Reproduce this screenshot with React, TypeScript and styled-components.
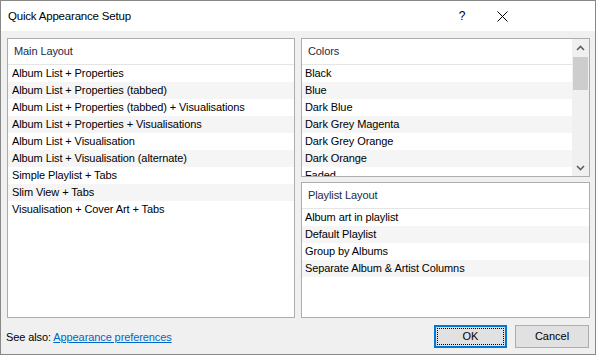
import React from "react";
import styled, { createGlobalStyle } from "styled-components";

const Global = createGlobalStyle`
  html, body { margin: 0; padding: 0; background: #ffffff; }
  body { font-family: "Liberation Sans", Arial, sans-serif; font-size: 11px; }
  * { box-sizing: border-box; }
`;

const Window = styled.div`
  width: 596px;
  height: 355px;
  border: 1px solid #888888;
  background: #f0f0f0;
  display: flex;
  flex-direction: column;
  font-family: "Liberation Sans", Arial, sans-serif;
  font-size: 11px;
  letter-spacing: -0.1px;
  color: #000;
`;

const TitleBar = styled.div`
  height: 30px;
  background: #ffffff;
  display: flex;
  align-items: center;
  padding-left: 7px;
  padding-right: 73px;
  flex-shrink: 0;
`;

const Title = styled.div`
  flex: 1;
  font-size: 11.5px;
  letter-spacing: -0.2px;
`;

const TitleButton = styled.div`
  width: 40px;
  height: 30px;
  display: flex;
  align-items: center;
  justify-content: center;
  font-size: 12px;
  color: #000;
`;

const Body = styled.div`
  flex: 1;
  display: grid;
  grid-template-columns: 288px 289px;
  column-gap: 6px;
  padding: 7px 5px 0 6px;
  min-height: 0;
`;

const RightColumn = styled.div`
  display: grid;
  grid-template-rows: 139px 136px;
  row-gap: 5px;
  height: 280px;
`;

const ListBox = styled.div<{ $h: number }>`
  height: ${(p) => p.$h}px;
  border: 1px solid #adadad;
  background: #ffffff;
  display: flex;
  overflow: hidden;
`;

const ListContent = styled.div`
  flex: 1;
  min-width: 0;
  overflow: hidden;
`;

const ListHeader = styled.div`
  height: 24px;
  border-bottom: 1px solid #e5e5e5;
  display: flex;
  align-items: center;
  padding-left: 6px;
  padding-bottom: 1px;
  color: #1c2a44;
  box-sizing: content-box;
`;

const Row = styled.div<{ $stripe: boolean; $pad: number }>`
  height: 17px;
  line-height: 17px;
  padding-left: ${(p) => p.$pad}px;
  background: ${(p) => (p.$stripe ? "#f5f5f5" : "#ffffff")};
  white-space: nowrap;
`;

const Scrollbar = styled.div`
  width: 17px;
  background: #f0f0f0;
  display: flex;
  flex-direction: column;
  flex-shrink: 0;
`;

const ScrollArrow = styled.div`
  height: 17px;
  display: flex;
  align-items: center;
  justify-content: center;
`;

const Track = styled.div`
  flex: 1;
  padding: 1px 1px 0 1px;
`;

const Thumb = styled.div`
  height: 33px;
  background: #cdcdcd;
`;

const Footer = styled.div`
  height: 36px;
  display: flex;
  align-items: center;
  padding: 0 6px 0 5px;
  flex-shrink: 0;
`;

const SeeAlso = styled.div`
  flex: 1;
  padding-top: 2px;
`;

const Link = styled.a`
  color: #0066cc;
  text-decoration: underline;
  cursor: pointer;
`;

const Button = styled.button<{ $primary?: boolean }>`
  width: ${(p) => (p.$primary ? 73 : 74)}px;
  height: 23px;
  margin-left: ${(p) => (p.$primary ? 0 : 8)}px;
  background: #e1e1e1;
  border: ${(p) => (p.$primary ? "2px solid #0078d7" : "1px solid #adadad")};
  font-family: "Liberation Sans", Arial, sans-serif;
  font-size: 11px;
  color: #000;
  padding: 0;
  outline: ${(p) => (p.$primary ? "1px dotted #000" : "none")};
  outline-offset: -4px;
`;

const Chevron = ({ up }: { up?: boolean }) => (
  <svg width="9" height="6" viewBox="0 0 9 6">
    <path
      d={up ? "M1 5 L4.5 1.5 L8 5" : "M1 1 L4.5 4.5 L8 1"}
      fill="none"
      stroke="#606060"
      strokeWidth="1.6"
    />
  </svg>
);

const CloseIcon = () => (
  <svg width="11" height="11" viewBox="0 0 11 11">
    <path d="M0.5 0.5 L10.5 10.5 M10.5 0.5 L0.5 10.5" stroke="#000" strokeWidth="1" />
  </svg>
);

const mainLayout = [
  "Album List + Properties",
  "Album List + Properties (tabbed)",
  "Album List + Properties (tabbed) + Visualisations",
  "Album List + Properties + Visualisations",
  "Album List + Visualisation",
  "Album List + Visualisation (alternate)",
  "Simple Playlist + Tabs",
  "Slim View + Tabs",
  "Visualisation + Cover Art + Tabs",
];

const colors = [
  "Black",
  "Blue",
  "Dark Blue",
  "Dark Grey Magenta",
  "Dark Grey Orange",
  "Dark Orange",
  "Faded",
];

const playlistLayout = [
  "Album art in playlist",
  "Default Playlist",
  "Group by Albums",
  "Separate Album & Artist Columns",
];

const ListRows = ({ items, pad }: { items: string[]; pad: number }) => (
  <>
    {items.map((t, i) => (
      <Row key={t} $stripe={i % 2 === 1} $pad={pad}>
        {t}
      </Row>
    ))}
  </>
);

export default function App() {
  return (
    <>
      <Global />
      <Window>
        <TitleBar>
          <Title>Quick Appearance Setup</Title>
          <TitleButton>?</TitleButton>
          <TitleButton>
            <CloseIcon />
          </TitleButton>
        </TitleBar>
        <Body>
          <ListBox $h={280}>
            <ListContent>
              <ListHeader>Main Layout</ListHeader>
              <ListRows items={mainLayout} pad={4} />
            </ListContent>
          </ListBox>
          <RightColumn>
            <ListBox $h={139}>
              <ListContent>
                <ListHeader>Colors</ListHeader>
                <ListRows items={colors} pad={3} />
              </ListContent>
              <Scrollbar>
                <ScrollArrow>
                  <Chevron up />
                </ScrollArrow>
                <Track>
                  <Thumb />
                </Track>
                <ScrollArrow>
                  <Chevron />
                </ScrollArrow>
              </Scrollbar>
            </ListBox>
            <ListBox $h={136}>
              <ListContent>
                <ListHeader>Playlist Layout</ListHeader>
                <ListRows items={playlistLayout} pad={3} />
              </ListContent>
            </ListBox>
          </RightColumn>
        </Body>
        <Footer>
          <SeeAlso>
            See also: <Link>Appearance preferences</Link>
          </SeeAlso>
          <Button $primary>OK</Button>
          <Button>Cancel</Button>
        </Footer>
      </Window>
    </>
  );
}
